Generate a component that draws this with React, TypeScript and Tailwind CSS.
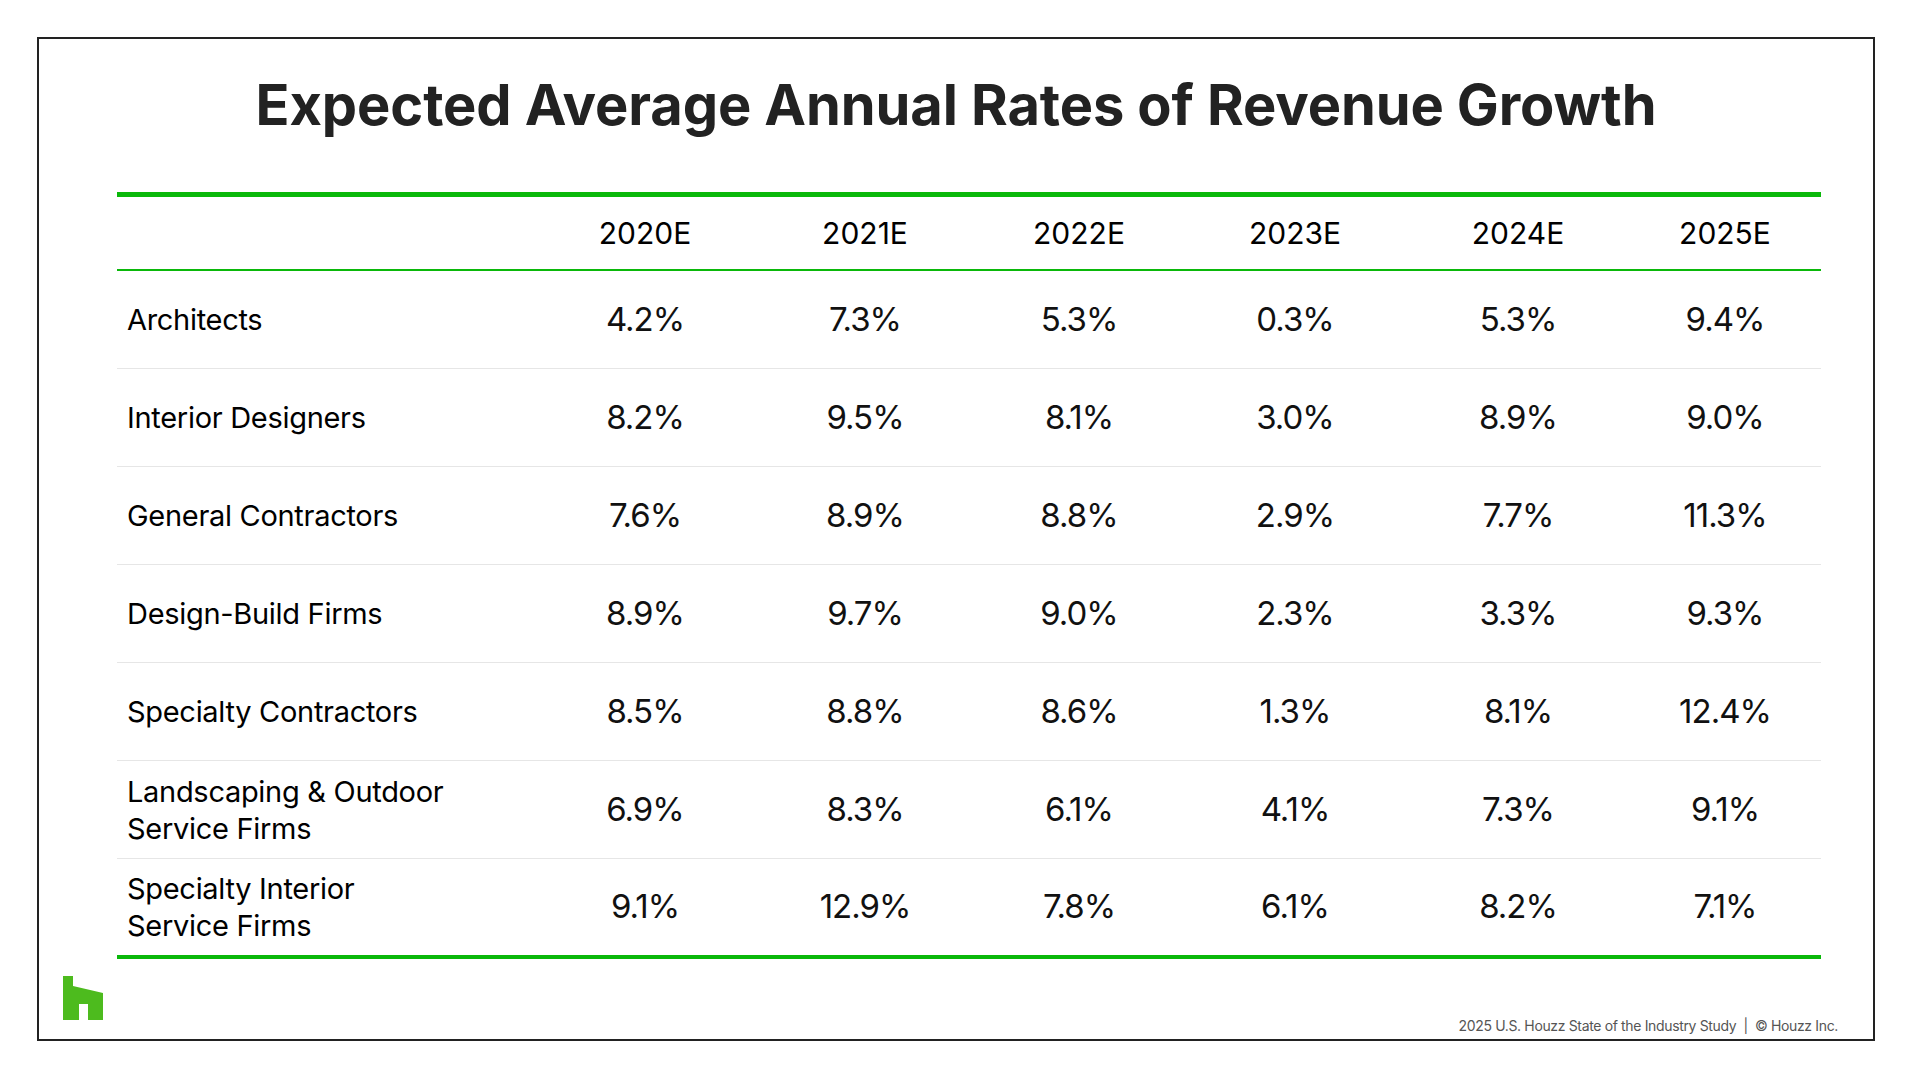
const years = ["2020E", "2021E", "2022E", "2023E", "2024E", "2025E"];

const rows: { label: string[]; values: string[] }[] = [
  { label: ["Architects"], values: ["4.2%", "7.3%", "5.3%", "0.3%", "5.3%", "9.4%"] },
  { label: ["Interior Designers"], values: ["8.2%", "9.5%", "8.1%", "3.0%", "8.9%", "9.0%"] },
  { label: ["General Contractors"], values: ["7.6%", "8.9%", "8.8%", "2.9%", "7.7%", "11.3%"] },
  { label: ["Design-Build Firms"], values: ["8.9%", "9.7%", "9.0%", "2.3%", "3.3%", "9.3%"] },
  { label: ["Specialty Contractors"], values: ["8.5%", "8.8%", "8.6%", "1.3%", "8.1%", "12.4%"] },
  { label: ["Landscaping & Outdoor", "Service Firms"], values: ["6.9%", "8.3%", "6.1%", "4.1%", "7.3%", "9.1%"] },
  { label: ["Specialty Interior", "Service Firms"], values: ["9.1%", "12.9%", "7.8%", "6.1%", "8.2%", "7.1%"] },
];

// column widths measured off the slide
const cols = "grid grid-cols-[418px_220px_220px_208px_224px_222px_192px]";

const HouzzLogo = () => (
  <svg width="40" height="44" viewBox="0 0 40 44">
    <polygon points="0,0 10,0 10,10 40,17 40,44 25,44 25,28 16,28 16,44 0,44" fill="#4dbb1e" />
  </svg>
);

const App = () => {
  return (
    <div className="w-[1912px] h-[1078px] bg-white pt-[37px] pl-[37px] font-[family-name:Inter,Liberation_Sans,sans-serif]">
      <div className="w-[1838px] h-[1004px] border-2 border-[#222] flex flex-col">
        <h1 className="mt-[34px] text-center text-[56px] leading-[64px] font-bold text-[#222] tracking-[-0.1px]">
          Expected Average Annual Rates of Revenue Growth
        </h1>

        <div className="ml-[78px] w-[1704px] mt-[55px] border-t-[5px] border-[#0ab80a]">
          <div className={`${cols} h-[74px] border-b-2 border-[#0ab80a] items-center`}>
            <div />
            {years.map((y) => (
              <div key={y} className="text-center text-[30px] text-black">
                {y}
              </div>
            ))}
          </div>

          {rows.map((r, i) => (
            <div
              key={i}
              className={`${cols} items-center ${i < rows.length - 1 ? "h-[98px] border-b border-[#e6e6e6]" : "h-[96px]"}`}
            >
              <div className="pl-[10px] text-[29px] leading-[37px] tracking-[-0.3px] text-black">
                {r.label.map((l, j) => (
                  <div key={j}>{l}</div>
                ))}
              </div>
              {r.values.map((v, j) => (
                <div key={j} className="text-center text-[33px] tracking-[-1px] text-[#111]">
                  {v}
                </div>
              ))}
            </div>
          ))}
          <div className="h-[4px] bg-[#0ab80a]" />
        </div>

        <div className="flex justify-between items-start mt-[17px] pl-[24px] pr-[35px]">
          <HouzzLogo />
          <p className="mt-[41px] text-[14px] leading-[18px] tracking-[-0.35px] text-[#555]">
            2025 U.S. Houzz State of the Industry Study&nbsp; |&nbsp; © Houzz Inc.
          </p>
        </div>
      </div>
    </div>
  );
};

export default App;
